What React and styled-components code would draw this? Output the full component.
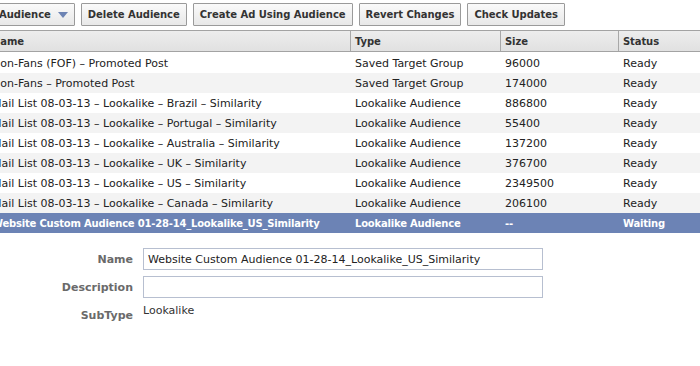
import React from "react";
import styled, { createGlobalStyle } from "styled-components";

const Global = createGlobalStyle`
  html, body { margin: 0; padding: 0; background: #fff; overflow: hidden; }
  body { font-family: "DejaVu Sans", "Lucida Grande", sans-serif; font-size: 11px; color: #333; }
`;

const Page = styled.div`
  width: 700px;
  height: 366px;
  overflow: hidden;
  background: #fff;
`;

const Toolbar = styled.div`
  display: flex;
  gap: 6px;
  padding-top: 3px;
  height: 23px;
  margin-left: -8px;
`;

const Button = styled.button`
  display: flex;
  align-items: center;
  gap: 7px;
  height: 23px;
  padding: 0 6px;
  border: 1px solid #9a9a9a;
  border-radius: 1px;
  background: linear-gradient(#fafafa, #e8e8e8);
  color: #333;
  font-family: inherit;
  font-size: 10px;
  letter-spacing: -0.03px;
  font-weight: bold;
  white-space: nowrap;
  flex: none;
`;

const Caret = styled.span`
  width: 0;
  height: 0;
  border-left: 5px solid transparent;
  border-right: 5px solid transparent;
  border-top: 6px solid #6d84b4;
`;

const Table = styled.div`
  margin-top: 4px;
  margin-left: -13px;
  width: 713px;
`;

const Row = styled.div`
  display: grid;
  grid-template-columns: 363px 150px 118px 1fr;
  height: 20px;
  align-items: center;
  background: ${p => (p.$selected ? "#6c83b5" : p.$alt ? "#f3f3f3" : "#fff")};
  color: ${p => (p.$selected ? "#fff" : "#222")};
  font-weight: ${p => (p.$selected ? "bold" : "normal")};
  font-size: ${p => (p.$selected ? "10px" : "11px")};
  letter-spacing: ${p => (p.$selected ? "-0.2px" : "0")};
`;

const HeaderRow = styled.div`
  display: grid;
  grid-template-columns: 363px 150px 118px 1fr;
  height: 20px;
  border-top: 1px solid #a3a3a3;
  border-bottom: 1px solid #a3a3a3;
  background: linear-gradient(#ededed, #e1e1e1);
  margin-bottom: 1px;
`;

const HeadCell = styled.div`
  display: flex;
  align-items: center;
  font-weight: bold;
  font-size: 10px;
  letter-spacing: -0.1px;
  color: #333;
  border-left: ${p => (p.$first ? "none" : "1px solid #a8a8a8")};
  padding-left: ${p => (p.$first ? "5px" : "4px")};
`;

const Cell = styled.div`
  padding: 2px 0 0 5px;
  white-space: nowrap;
  overflow: hidden;
  line-height: 16px;
`;

const Form = styled.div`
  display: grid;
  grid-template-columns: 133px 400px;
  column-gap: 10px;
  row-gap: 6px;
  margin-top: 15px;
  align-items: center;
`;

const Label = styled.div`
  text-align: right;
  font-weight: bold;
  color: #6a6a6a;
  align-self: ${p => (p.$top ? "start" : "center")};
  padding-top: ${p => (p.$top ? "5px" : "0")};
`;

const Input = styled.div`
  height: 20px;
  border: 1px solid #b7bfd0;
  display: flex;
  align-items: center;
  padding-left: 4px;
  color: #222;
`;

const Value = styled.div`
  color: #333;
  align-self: start;
`;

const rows = [
  ["Non-Fans (FOF) \u2013 Promoted Post", "Saved Target Group", "96000", "Ready"],
  ["Non-Fans \u2013 Promoted Post", "Saved Target Group", "174000", "Ready"],
  ["Mail List 08-03-13 \u2013 Lookalike \u2013 Brazil \u2013 Similarity", "Lookalike Audience", "886800", "Ready"],
  ["Mail List 08-03-13 \u2013 Lookalike \u2013 Portugal \u2013 Similarity", "Lookalike Audience", "55400", "Ready"],
  ["Mail List 08-03-13 \u2013 Lookalike \u2013 Australia \u2013 Similarity", "Lookalike Audience", "137200", "Ready"],
  ["Mail List 08-03-13 \u2013 Lookalike \u2013 UK \u2013 Similarity", "Lookalike Audience", "376700", "Ready"],
  ["Mail List 08-03-13 \u2013 Lookalike \u2013 US \u2013 Similarity", "Lookalike Audience", "2349500", "Ready"],
  ["Mail List 08-03-13 \u2013 Lookalike \u2013 Canada \u2013 Similarity", "Lookalike Audience", "206100", "Ready"],
  ["Website Custom Audience 01-28-14_Lookalike_US_Similarity", "Lookalike Audience", "--", "Waiting"],
];

export default function App() {
  return (
    <Page>
      <Global />
      <Toolbar>
        <Button>Audience <Caret /></Button>
        <Button>Delete Audience</Button>
        <Button>Create Ad Using Audience</Button>
        <Button>Revert Changes</Button>
        <Button>Check Updates</Button>
      </Toolbar>
      <Table>
        <HeaderRow>
          <HeadCell $first>Name</HeadCell>
          <HeadCell>Type</HeadCell>
          <HeadCell>Size</HeadCell>
          <HeadCell>Status</HeadCell>
        </HeaderRow>
        {rows.map((r, i) => (
          <Row key={i} $alt={i % 2 === 1} $selected={i === rows.length - 1}>
            {r.map((c, j) => (
              <Cell key={j}>{c}</Cell>
            ))}
          </Row>
        ))}
      </Table>
      <Form>
        <Label>Name</Label>
        <Input>Website Custom Audience 01-28-14_Lookalike_US_Similarity</Input>
        <Label>Description</Label>
        <Input />
        <Label $top>SubType</Label>
        <Value>Lookalike</Value>
      </Form>
    </Page>
  );
}
